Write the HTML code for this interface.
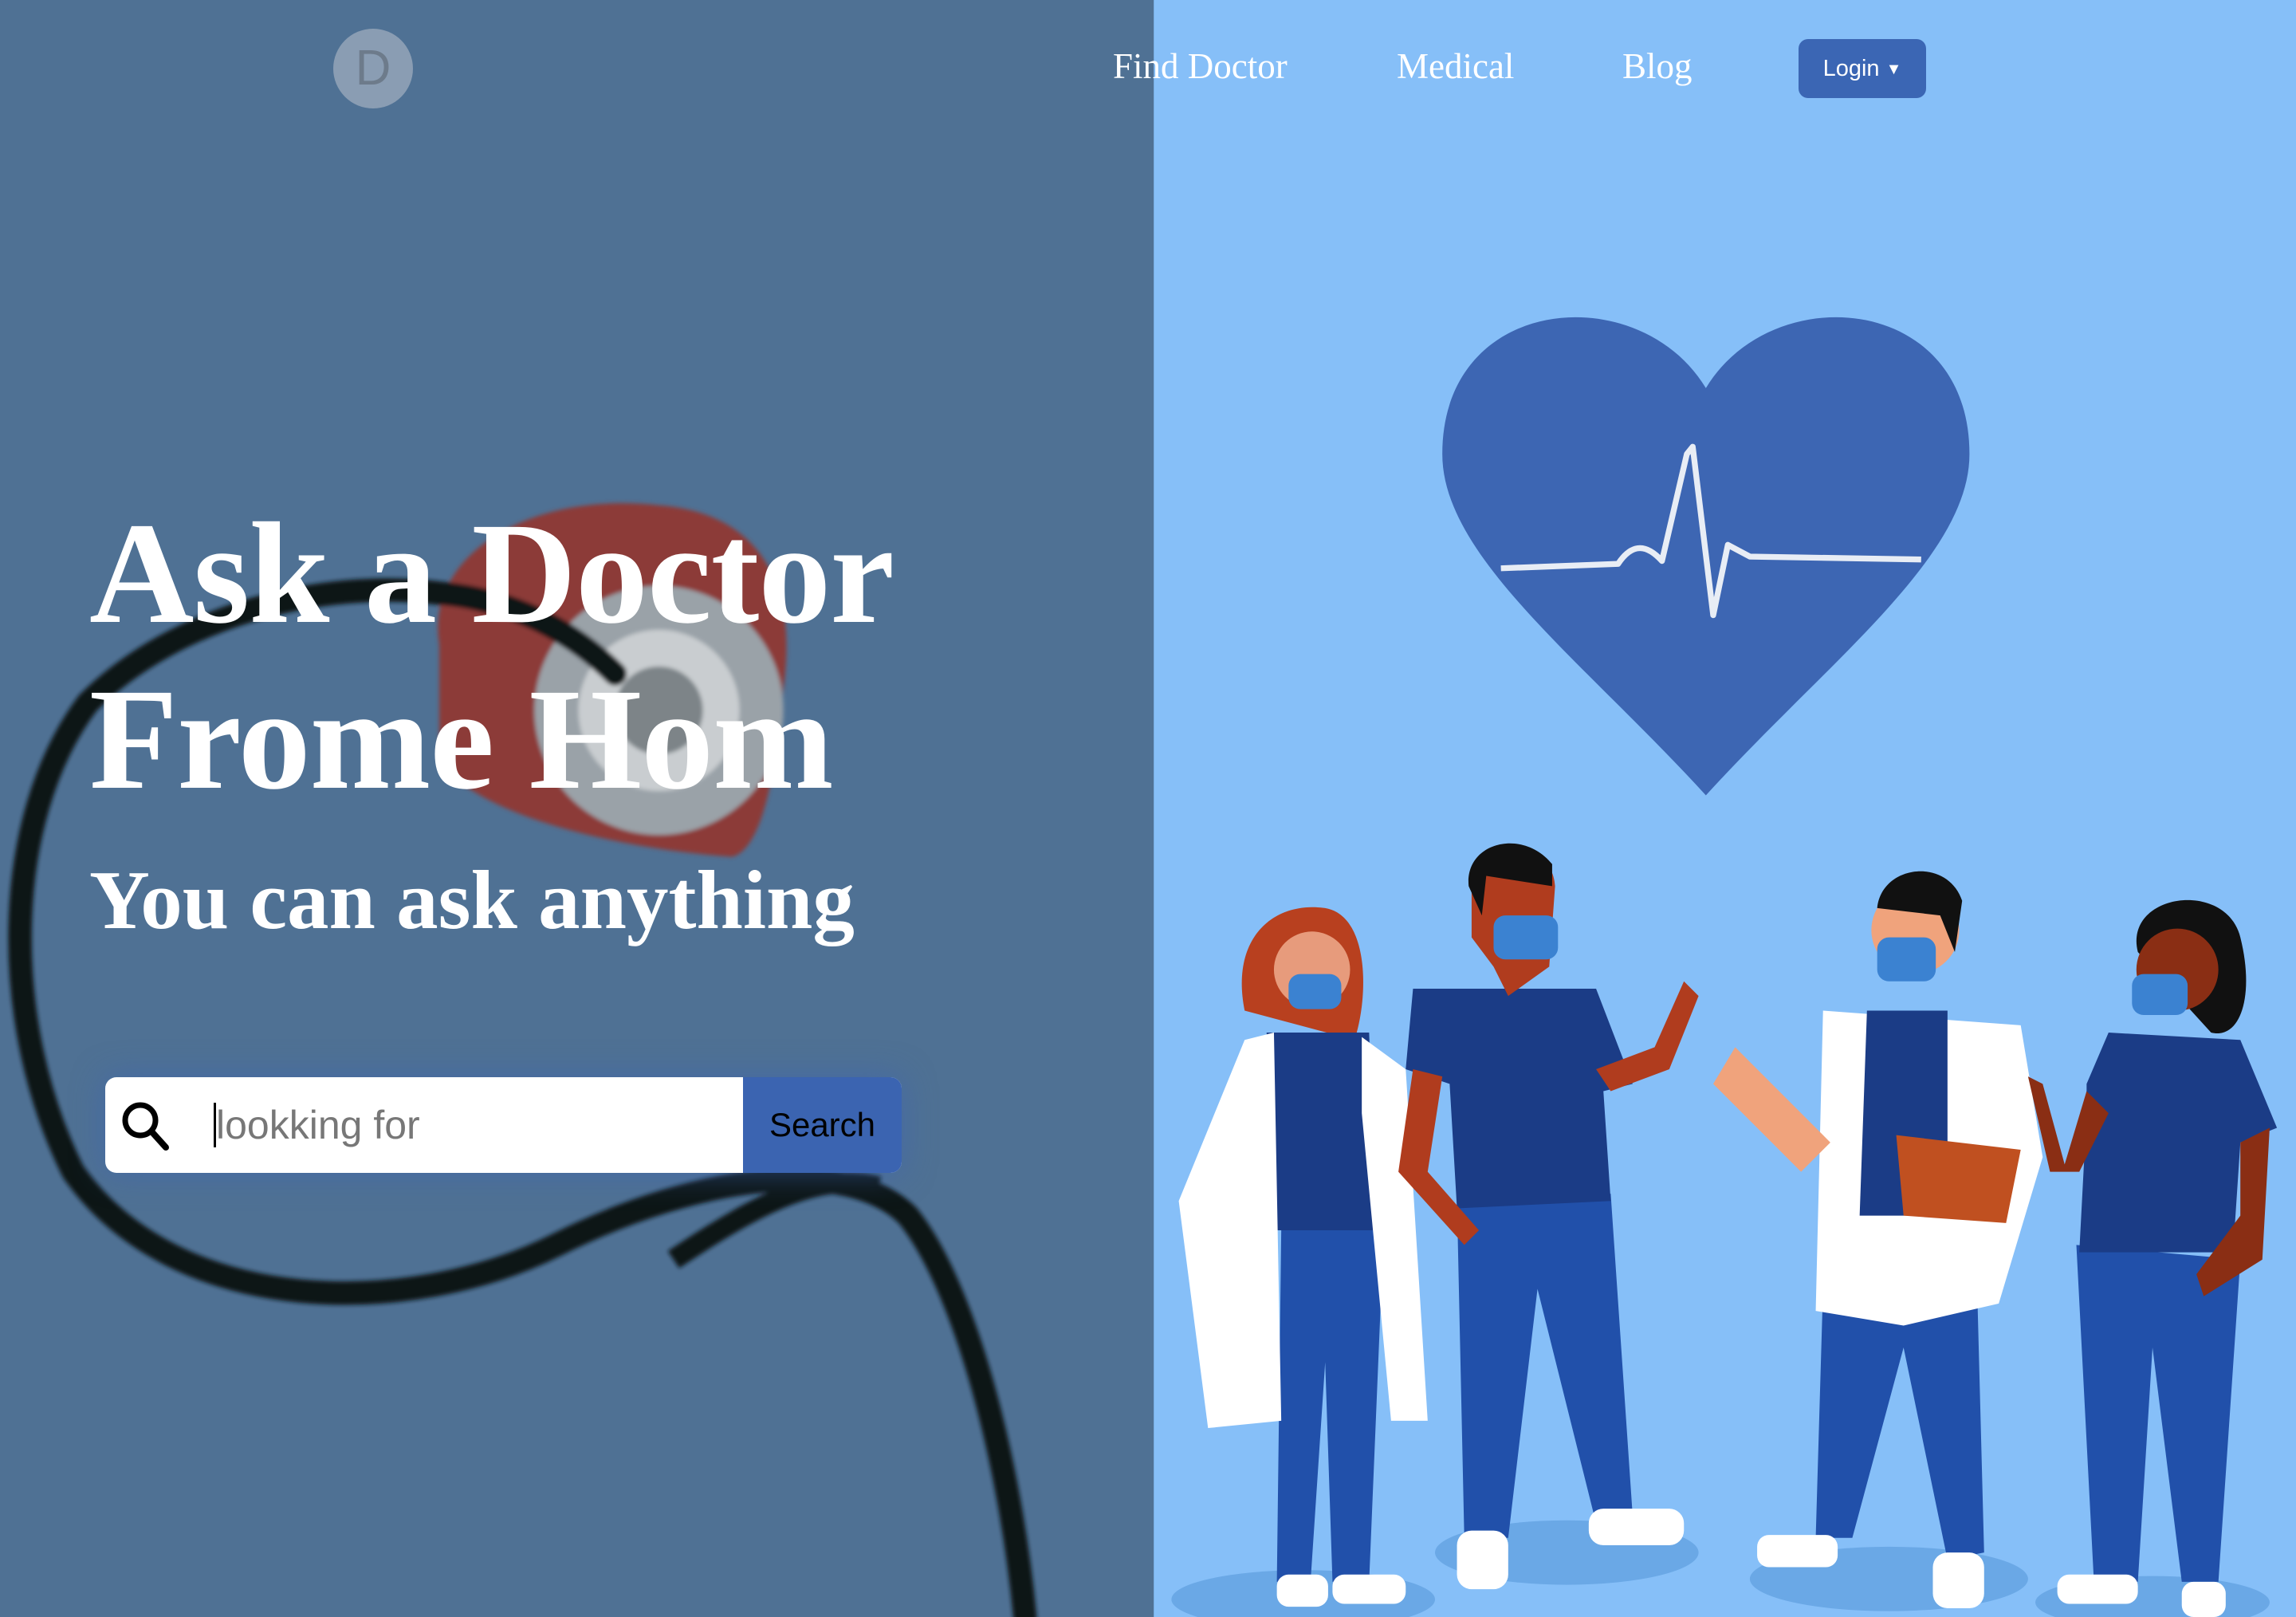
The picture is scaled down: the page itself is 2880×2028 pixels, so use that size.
<!DOCTYPE html>
<html><head><meta charset="utf-8"><style>
html,body{margin:0;padding:0;}
body{width:2880px;height:2028px;position:relative;overflow:hidden;background:#86bff8;font-family:"Liberation Sans",sans-serif;}
#art{position:absolute;left:0;top:0;width:2880px;height:2028px;}
.nav{position:absolute;top:57px;font-family:"Liberation Serif",serif;font-size:45px;color:#fff;}
.logo{position:absolute;left:418px;top:36px;width:100px;height:100px;border-radius:50%;background:#8a9db3;color:#6d7b8b;font-size:62px;text-align:center;line-height:100px;}
.login{position:absolute;left:2256px;top:49px;width:160px;height:74px;border-radius:12px;background:#3b66b4;color:#fff;font-size:29px;line-height:74px;text-align:center;}
h1{position:absolute;left:112px;top:616px;margin:0;font-family:"Liberation Serif",serif;font-weight:bold;font-size:182px;line-height:208px;color:#fff;letter-spacing:-1px;}
h2{position:absolute;left:112px;top:1064px;margin:0;font-family:"Liberation Serif",serif;font-weight:bold;font-size:105px;line-height:130px;color:#fff;}
.search{position:absolute;left:132px;top:1351px;width:999px;height:120px;border-radius:14px;background:#fff;overflow:hidden;box-shadow:0 0 40px rgba(60,100,180,.6);}
.btn{position:absolute;right:0;top:0;width:199px;height:120px;background:#3b64b1;color:#000;font-size:42px;line-height:120px;text-align:center;}
.ph{position:absolute;left:136px;top:0;font-size:50px;color:#777;border-left:3px solid #000;height:56px;line-height:56px;margin-top:32px;}
</style></head><body>
<svg id="art" viewBox="0 0 1568 1104" preserveAspectRatio="none">
<rect x="0" y="0" width="788" height="1104" fill="#4f7194"/>
<defs><filter id="b"><feGaussianBlur stdDeviation="1.5"/></filter></defs>
<g filter="url(#b)">
<path d="M300 440 C290 380 360 335 450 345 C520 350 545 400 535 470 C530 530 520 580 500 585 C430 580 330 560 300 520Z" fill="#8c3b37"/>
<circle cx="450" cy="485" r="85" fill="#9aa2a8"/>
<circle cx="450" cy="485" r="55" fill="#c9cdd0"/>
<circle cx="450" cy="485" r="30" fill="#7d8488"/>
<path d="M700 1104 C690 1000 660 880 620 830 C580 790 480 800 380 850 C280 900 120 900 50 800 C0 700 0 560 60 480 C120 420 220 395 300 405 C360 410 400 440 420 460" fill="none" stroke="#0f1318" stroke-width="16" stroke-linecap="round"/>
<path d="M600 810 C560 800 520 820 460 860" fill="none" stroke="#0f1318" stroke-width="14"/>
</g>
<rect x="788" y="0" width="780" height="1104" fill="#86bff8"/>
<path d="M1165 265 C1120 190 985 200 985 310 C985 380 1080 450 1165 543 C1250 450 1345 380 1345 310 C1345 200 1210 190 1165 265Z" fill="#3d66b3"/>
<path d="M1025 388 L1105 385 C1115 370 1125 372 1135 383 L1152 310 L1156 305 L1170 420 L1180 372 L1195 380 L1312 382" fill="none" stroke="#e8edf5" stroke-width="4" stroke-linejoin="round"/>
<g fill="#6aa8e6">
<ellipse cx="890" cy="1092" rx="90" ry="20"/><ellipse cx="1070" cy="1060" rx="90" ry="22"/>
<ellipse cx="1290" cy="1078" rx="95" ry="22"/><ellipse cx="1470" cy="1094" rx="80" ry="18"/></g>
<path d="M850 690 C840 640 870 615 905 620 C935 625 935 680 925 710 Z" fill="#b8401f"/>
<path d="M875 840 L945 840 L935 1080 L910 1080 L905 930 L895 1080 L872 1080Z" fill="#2150aa"/>
<path d="M865 705 L935 705 L940 840 L870 840Z" fill="#1b3c86"/>
<path d="M850 710 L870 705 L875 970 L825 975 L805 820Z M930 708 L960 730 L975 970 L950 970 L930 760Z" fill="#fff"/>
<circle cx="896" cy="662" r="26" fill="#e79b7c"/><rect x="880" y="665" width="36" height="24" rx="8" fill="#3b82d1"/>
<rect x="872" y="1075" width="35" height="22" rx="8" fill="#fff"/><rect x="910" y="1075" width="50" height="20" rx="8" fill="#fff"/>
<path d="M995 820 L1100 815 L1115 1035 L1090 1040 L1050 880 L1030 1050 L1000 1050Z" fill="#2150aa"/>
<path d="M965 675 L1090 675 L1115 740 L1095 745 L1100 820 L995 825 L990 740 L960 730Z" fill="#1b3c86"/>
<path d="M1090 730 L1100 745 L1140 730 L1160 680 L1150 670 L1130 715Z M965 730 L985 735 L975 800 L1010 840 L1000 850 L955 800Z" fill="#b03c1e"/>
<path d="M1005 600 C1005 575 1060 570 1062 605 L1058 660 L1030 680 L1020 660 L1005 640Z" fill="#b03c1e"/><path d="M1003 605 C1000 575 1040 565 1060 590 L1060 605 L1015 598 L1012 625Z" fill="#111"/>
<rect x="1020" y="625" width="44" height="30" rx="8" fill="#3b82d1"/>
<rect x="995" y="1045" width="35" height="40" rx="10" fill="#fff"/><rect x="1085" y="1030" width="65" height="25" rx="10" fill="#fff"/>
<path d="M1245 880 L1350 870 L1355 1060 L1330 1065 L1300 920 L1265 1050 L1240 1050Z" fill="#2150aa"/>
<path d="M1245 690 L1380 700 L1395 790 L1365 890 L1300 905 L1240 895Z" fill="#fff"/>
<path d="M1275 690 L1330 690 L1330 830 L1270 830Z" fill="#1b3c86"/>
<path d="M1295 775 L1380 785 L1370 835 L1300 830Z" fill="#c05020"/>
<path d="M1200 730 L1185 715 L1170 740 L1230 800 L1250 780Z" fill="#f0a37c"/>
<circle cx="1308" cy="635" r="30" fill="#f0a37c"/><path d="M1282 620 C1285 590 1330 585 1340 615 L1335 650 L1325 625Z" fill="#111"/>
<rect x="1282" y="640" width="40" height="30" rx="8" fill="#3b82d1"/>
<rect x="1200" y="1048" width="55" height="22" rx="8" fill="#fff"/><rect x="1320" y="1060" width="35" height="38" rx="10" fill="#fff"/>
<path d="M1418 850 L1530 860 L1515 1080 L1490 1080 L1470 920 L1460 1080 L1430 1080Z" fill="#2150aa"/>
<path d="M1440 705 L1530 710 L1555 770 L1530 780 L1525 855 L1420 855 L1425 760 L1425 740Z" fill="#1b3c86"/>
<path d="M1530 780 L1550 770 L1545 860 L1505 885 L1500 870 L1530 830Z M1425 745 L1410 795 L1395 740 L1385 735 L1400 800 L1420 800 L1440 760Z" fill="#8a2e14"/>
<path d="M1460 650 C1450 610 1520 600 1530 640 C1540 680 1530 710 1510 705 Z" fill="#111"/>
<circle cx="1487" cy="662" r="28" fill="#8a2e14"/><rect x="1456" y="665" width="38" height="28" rx="8" fill="#3b82d1"/>
<rect x="1405" y="1075" width="55" height="20" rx="8" fill="#fff"/><rect x="1490" y="1080" width="30" height="24" rx="8" fill="#fff"/>
</svg>
<div class="logo">D</div>
<div class="nav" style="left:1396px">Find Doctor</div>
<div class="nav" style="left:1752px">Medical</div>
<div class="nav" style="left:2035px">Blog</div>
<div class="login">Login <span style="font-size:20px;vertical-align:2px">▼</span></div>
<h1>Ask a Doctor<br>Frome Hom</h1>
<h2>You can ask anything</h2>
<div class="search">
<svg style="position:absolute;left:18px;top:28px" width="66" height="66" viewBox="0 0 66 66"><circle cx="26" cy="26" r="19" fill="none" stroke="#000" stroke-width="7"/><path d="M40 40 L58 60" stroke="#000" stroke-width="8" stroke-linecap="round"/></svg>
<div class="ph">lookking for</div>
<div class="btn">Search</div>
</div>
</body></html>
